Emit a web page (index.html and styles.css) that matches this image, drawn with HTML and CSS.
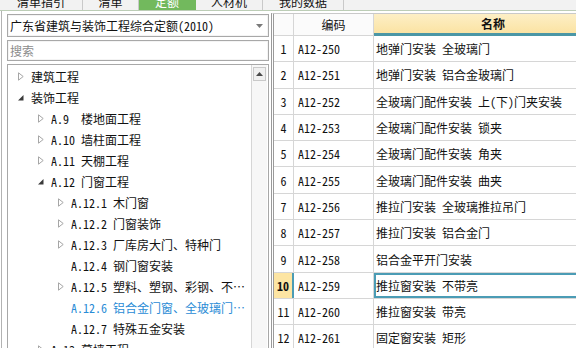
FILE: index.html
```html
<!DOCTYPE html>
<html lang="zh">
<head>
<meta charset="utf-8">
<link rel="stylesheet" href="styles.css">
</head>
<body>
<div class="tabs">
  <div class="tab t1"><span class="tab-label">清单指引</span></div>
  <div class="tab t2"><span class="tab-label">清单</span></div>
  <div class="tab t3 active"><span class="tab-label">定额</span></div>
  <div class="tab t4"><span class="tab-label">人材机</span></div>
  <div class="tab t5"><span class="tab-label">我的数据</span></div>
</div>
<div class="main">
  <div class="left">
    <div class="combo">
      <span class="combo-text">广东省建筑与装饰工程综合定额(2010)</span>
      <svg class="combo-arrow" width="7" height="4" viewBox="0 0 7 4"><path d="M0 0H7L3.5 4Z" fill="#7a7a7a"/></svg>
    </div>
    <div class="search">搜索</div>
    <div class="tree">
      <div class="tree-body">
        <div class="node l0"><span class="arr"><svg width="6" height="9" viewBox="0 0 6 9"><path d="M0.5 0.8L5.2 4.5L0.5 8.2Z" fill="#fff" stroke="#a6a6a6"/></svg></span><span class="lbl">建筑工程</span></div>
        <div class="node l0"><span class="arr"><svg width="6" height="9" viewBox="0 0 6 9"><path d="M0 7.5L5.5 2V7.5Z" fill="#3a3a3a"/></svg></span><span class="lbl">装饰工程</span></div>
        <div class="node l1"><span class="arr"><svg width="6" height="9" viewBox="0 0 6 9"><path d="M0.5 0.8L5.2 4.5L0.5 8.2Z" fill="#fff" stroke="#a6a6a6"/></svg></span><span class="lbl">A.9&nbsp; 楼地面工程</span></div>
        <div class="node l1"><span class="arr"><svg width="6" height="9" viewBox="0 0 6 9"><path d="M0.5 0.8L5.2 4.5L0.5 8.2Z" fill="#fff" stroke="#a6a6a6"/></svg></span><span class="lbl">A.10 墙柱面工程</span></div>
        <div class="node l1"><span class="arr"><svg width="6" height="9" viewBox="0 0 6 9"><path d="M0.5 0.8L5.2 4.5L0.5 8.2Z" fill="#fff" stroke="#a6a6a6"/></svg></span><span class="lbl">A.11 天棚工程</span></div>
        <div class="node l1"><span class="arr"><svg width="6" height="9" viewBox="0 0 6 9"><path d="M0 7.5L5.5 2V7.5Z" fill="#3a3a3a"/></svg></span><span class="lbl">A.12 门窗工程</span></div>
        <div class="node l2"><span class="arr"><svg width="6" height="9" viewBox="0 0 6 9"><path d="M0.5 0.8L5.2 4.5L0.5 8.2Z" fill="#fff" stroke="#a6a6a6"/></svg></span><span class="lbl">A.12.1 木门窗</span></div>
        <div class="node l2"><span class="arr"><svg width="6" height="9" viewBox="0 0 6 9"><path d="M0.5 0.8L5.2 4.5L0.5 8.2Z" fill="#fff" stroke="#a6a6a6"/></svg></span><span class="lbl">A.12.2 门窗装饰</span></div>
        <div class="node l2"><span class="arr"><svg width="6" height="9" viewBox="0 0 6 9"><path d="M0.5 0.8L5.2 4.5L0.5 8.2Z" fill="#fff" stroke="#a6a6a6"/></svg></span><span class="lbl">A.12.3 厂库房大门、特种门</span></div>
        <div class="node l2"><span class="arr"></span><span class="lbl">A.12.4 钢门窗安装</span></div>
        <div class="node l2"><span class="arr"><svg width="6" height="9" viewBox="0 0 6 9"><path d="M0.5 0.8L5.2 4.5L0.5 8.2Z" fill="#fff" stroke="#a6a6a6"/></svg></span><span class="lbl">A.12.5 塑料、塑钢、彩钢、不锈钢门窗</span></div>
        <div class="node l2 sel"><span class="arr"></span><span class="lbl">A.12.6 铝合金门窗、全玻璃门安装</span></div>
        <div class="node l2"><span class="arr"></span><span class="lbl">A.12.7 特殊五金安装</span></div>
        <div class="node l1"><span class="arr"><svg width="6" height="9" viewBox="0 0 6 9"><path d="M0.5 0.8L5.2 4.5L0.5 8.2Z" fill="#fff" stroke="#a6a6a6"/></svg></span><span class="lbl">A.13 幕墙工程</span></div>
      </div>
      <div class="vscroll">
        <div class="sbtn"><svg width="7" height="4" viewBox="0 0 7 4"><path d="M0 4H7L3.5 0Z" fill="#4a4a4a"/></svg></div>
      </div>
    </div>
  </div>
  <div class="grid">
    <div class="row head">
      <div class="c num"></div>
      <div class="c code">编码</div>
      <div class="c name">名称</div>
    </div>
    <div class="row"><div class="c num">1</div><div class="c code">A12-250</div><div class="c name">地弹门安装 全玻璃门</div></div>
    <div class="row"><div class="c num">2</div><div class="c code">A12-251</div><div class="c name">地弹门安装 铝合金玻璃门</div></div>
    <div class="row"><div class="c num">3</div><div class="c code">A12-252</div><div class="c name">全玻璃门配件安装 上(下)门夹安装</div></div>
    <div class="row"><div class="c num">4</div><div class="c code">A12-253</div><div class="c name">全玻璃门配件安装 锁夹</div></div>
    <div class="row"><div class="c num">5</div><div class="c code">A12-254</div><div class="c name">全玻璃门配件安装 角夹</div></div>
    <div class="row"><div class="c num">6</div><div class="c code">A12-255</div><div class="c name">全玻璃门配件安装 曲夹</div></div>
    <div class="row"><div class="c num">7</div><div class="c code">A12-256</div><div class="c name">推拉门安装 全玻璃推拉吊门</div></div>
    <div class="row"><div class="c num">8</div><div class="c code">A12-257</div><div class="c name">推拉门安装 铝合金门</div></div>
    <div class="row"><div class="c num">9</div><div class="c code">A12-258</div><div class="c name">铝合金平开门安装</div></div>
    <div class="row current"><div class="c num">10</div><div class="c code">A12-259</div><div class="c name">推拉窗安装 不带亮</div></div>
    <div class="row"><div class="c num">11</div><div class="c code">A12-260</div><div class="c name">推拉窗安装 带亮</div></div>
    <div class="row"><div class="c num">12</div><div class="c code">A12-261</div><div class="c name">固定窗安装 矩形</div></div>
  </div>
</div>
</body>
</html>
```

FILE: styles.css
```css
* { box-sizing: border-box; }
html, body { margin: 0; padding: 0; }
body {
  width: 576px;
  height: 348px;
  overflow: hidden;
  background: #fff;
  color: #111;
  font-family: "Noto Sans Mono CJK SC", "Noto Sans CJK SC", sans-serif;
  font-size: 12px;
}

/* tabs */
.tabs {
  display: flex;
  height: 11px;
  overflow: hidden;
  background: #f2f2f2;
  border-bottom: 1px solid #bccdb6;
}
.tab {
  height: 10px;
  overflow: hidden;
  border-right: 1px solid #c9c9c9;
  text-align: center;
}
.tab-label {
  display: block;
  margin-top: -8px;
  line-height: 20px;
}
.t1 { width: 83px; }
.t2 { width: 56px; }
.t3 { width: 57px; }
.t4 { width: 67px; }
.t5 { width: 81px; }
.tab.active { background: #72b95d; color: #fff; border-right-color: #72b95d; }

/* main area */
.main {
  display: flex;
  height: 337px;
}
.left {
  width: 270px;
  margin-left: 1px;
  border-left: 1px solid #b3b3b3;
  padding: 3px 2px 0 5px;
  display: flex;
  flex-direction: column;
  gap: 3px;
  flex: none;
}
.combo {
  height: 23px;
  border: 1px solid #a8a8a8;
  box-shadow: inset 0 0 0 1px #f4f4f4;
  display: flex;
  align-items: center;
  padding: 0 5px 0 2px;
  flex: none;
}
.combo-text { flex: 1; white-space: nowrap; }
.combo-arrow { flex: none; }
.search {
  height: 21px;
  border: 1px solid #a8a8a8;
  box-shadow: inset 0 0 0 1px #f4f4f4;
  color: #8c8c8c;
  line-height: 19px;
  padding-left: 2px;
  flex: none;
}
.tree {
  flex: 1;
  border: 1px solid #a8a8a8;
  border-bottom: none;
  display: flex;
  min-height: 0;
  overflow: hidden;
}
.tree-body {
  flex: 1;
  min-width: 0;
  padding-top: 1px;
}
.node {
  height: 21px;
  display: flex;
  align-items: center;
  white-space: nowrap;
  padding-right: 4px;
}
.node.l0 { padding-left: 10px; }
.node.l1 { padding-left: 30px; }
.node.l2 { padding-left: 50px; }
.arr {
  width: 6px;
  height: 9px;
  margin-right: 7px;
  flex: none;
  display: flex;
}
.lbl {
  overflow: hidden;
  text-overflow: ellipsis;
  white-space: nowrap;
  min-width: 0;
}
.node.sel .lbl { color: #2a8cd6; }

.vscroll {
  width: 16px;
  flex: none;
  background: #f7f7f7;
  border-left: 1px solid #d6d6d6;
  padding: 2px 1px 0 1px;
  margin-right: 1px;
}
.sbtn {
  height: 14px;
  border: 1px solid #c9c9c9;
  background: #f0f0f0;
  display: flex;
  align-items: center;
  justify-content: center;
}

/* grid */
.grid {
  flex: 1;
  min-width: 0;
  margin-top: 2px;
  border-left: 3px double #9a9a9a;
  border-top: 1px solid #c9c9c9;
  overflow: hidden;
}
.row {
  display: flex;
  height: 26.3px;
  border-bottom: 1px solid #d6d6d6;
}
.row.head {
  height: 22px;
  border-bottom: none;
}
.c {
  display: flex;
  align-items: center;
  border-right: 1px solid #d6d6d6;
  white-space: nowrap;
  flex: none;
}
.num { width: 20px; justify-content: center; }
.code { width: 80px; padding-left: 4px; }
.name { width: 240px; padding-left: 2px; border-right: none; }

.head .c { border-bottom: 1px solid #d6d6d6; background: #fbfbfb; }
.head .code { justify-content: center; padding-left: 0; }
.head .name {
  justify-content: center;
  font-weight: bold;
  background: linear-gradient(#fdefc6, #fbe3a3);
  border-bottom: 3px solid #4b97a6;
  padding-left: 0;
  width: 238px;
}

.row.current .num {
  background: #fde5a3;
  font-weight: bold;
  border-right: 2px solid #4b9cb5;
}
.row.current .name {
  box-shadow: inset 0 0 0 2px #4b9cb5;
}
```
